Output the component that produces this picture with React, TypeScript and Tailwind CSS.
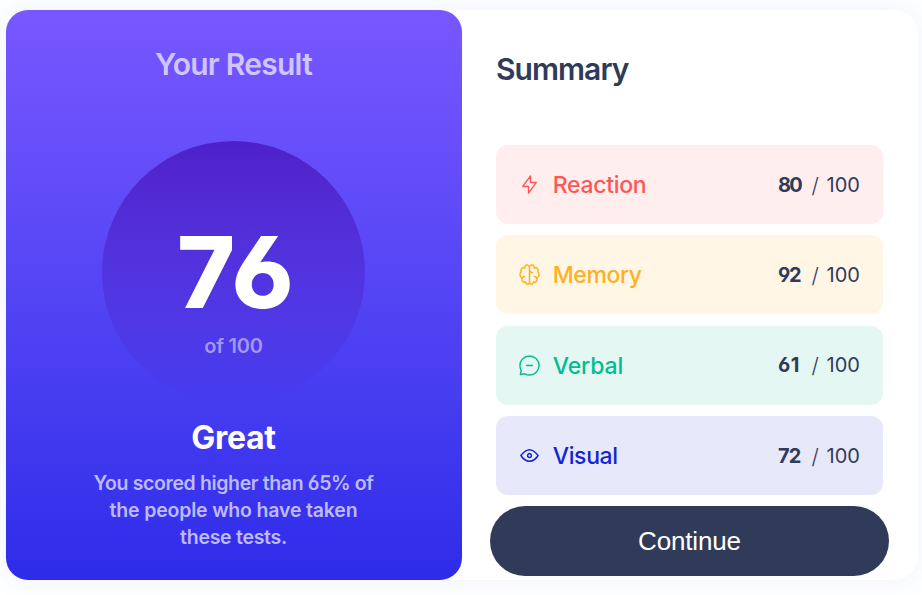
import type { ReactNode } from "react";

type Row = {
  label: string;
  score: number;
  bg: string;
  color: string;
  tracking: string;
  scoreTracking: string;
  icon: ReactNode;
};

const rows: Row[] = [
  {
    label: "Reaction",
    score: 80,
    bg: "bg-[#ffeeed]",
    color: "text-[#ff5757]",
    tracking: "tracking-[-0.3px]",
    scoreTracking: "tracking-[-1.8px]",
    icon: <path d="M10.833 8.333V2.5l-6.666 9.167h5V17.5l6.666-9.167h-5Z" />,
  },
  {
    label: "Memory",
    score: 92,
    bg: "bg-[#fff6e6]",
    color: "text-[#ffb01f]",
    tracking: "tracking-[-0.4px]",
    scoreTracking: "tracking-[-1.2px]",
    icon: (
      <>
        <path d="M5.833 11.667a2.5 2.5 0 1 0 .834 4.858" />
        <path d="M3.553 13.004a3.333 3.333 0 0 1-.728-5.53m.025-.067a2.083 2.083 0 0 1 2.983-2.824m.199.054A2.083 2.083 0 1 1 10 3.75v12.917a1.667 1.667 0 0 1-3.333 0M10 5.833a2.5 2.5 0 0 0 2.5 2.5m1.667 3.334a2.5 2.5 0 1 1-.834 4.858" />
        <path d="M16.447 13.004a3.334 3.334 0 0 0 .728-5.53m-.025-.067a2.083 2.083 0 0 0-2.983-2.824M10 3.75a2.085 2.085 0 0 1 2.538-2.033 2.084 2.084 0 0 1 1.43 2.92m-.635 12.03a1.667 1.667 0 0 1-3.333 0" />
      </>
    ),
  },
  {
    label: "Verbal",
    score: 61,
    bg: "bg-[#e5f7f3]",
    color: "text-[#00bd91]",
    tracking: "tracking-[-0.1px]",
    scoreTracking: "tracking-[0.4px]",
    icon: (
      <path d="M7.5 10h5M10 18.333A8.333 8.333 0 1 0 1.667 10c0 1.518.406 2.942 1.115 4.167l-.699 3.75 3.75-.699A8.295 8.295 0 0 0 10 18.333Z" />
    ),
  },
  {
    label: "Visual",
    score: 72,
    bg: "bg-[#e7e8fa]",
    color: "text-[#1125d4]",
    tracking: "tracking-[-0.35px]",
    scoreTracking: "tracking-[-0.9px]",
    icon: (
      <>
        <path d="M10 11.667a1.667 1.667 0 1 0 0-3.334 1.667 1.667 0 0 0 0 3.334Z" />
        <path d="M17.5 10c-1.574 2.492-4.402 5-7.5 5s-5.926-2.508-7.5-5C4.416 7.632 6.66 5 10 5s5.584 2.632 7.5 5Z" />
      </>
    ),
  },
];

function ScoreRow({ row }: { row: Row }) {
  return (
    <li className={`flex h-[79px] items-center rounded-xl pl-[22px] pr-[22px] ${row.bg}`}>
      <span className={`flex items-center gap-[11.7px] ${row.color}`}>
        <svg
          viewBox="0 0 20 20"
          className="size-[23px]"
          fill="none"
          stroke="currentColor"
          strokeWidth="1.25"
          strokeLinecap="round"
          strokeLinejoin="round"
        >
          {row.icon}
        </svg>
        <span className={`pt-[2px] text-[23px] leading-none font-medium ${row.tracking}`}>{row.label}</span>
      </span>
      <span className="ml-auto flex pt-px text-[20px] leading-none text-[#303b59]">
        <b className={`w-[33.5px] font-bold ${row.scoreTracking}`}>{row.score}</b>
        <span className="w-[15px] pt-px text-[21px] leading-[20px] font-light">/</span>
        <span className="w-[34.5px]">100</span>
      </span>
    </li>
  );
}

export default function App() {
  return (
    <main className="h-[595px] w-[922px] overflow-hidden bg-white pt-[10px] pl-[6px] font-['Inter',sans-serif] [font-feature-settings:'cv03','cv04']">
      <div className="flex h-[570px] w-[912px] rounded-[24px] bg-white shadow-[0_0_26px_4px_rgba(61,108,255,0.07)]">
        <section className="flex w-[456px] flex-col items-center rounded-[22px] bg-linear-to-b from-[#7857ff] to-[#2e2be9] pr-px">
          <h2 className="mt-[39px] text-[30px] leading-[30px] font-semibold tracking-[-0.75px] text-[#d0c5ff]">Your Result</h2>
          <div className="mt-[62px] flex size-[263px] flex-col items-center rounded-full bg-linear-to-b from-[#4d21c9] to-[#2421c9]/0">
            <span className="mt-[81px] pl-[5px] text-[99px] leading-[100px] font-extrabold tracking-[1.5px] text-white">76</span>
            <span className="mt-[14px] text-[20px] leading-[20px] font-semibold tracking-[-0.2px] text-[#a497f4]">of 100</span>
          </div>
          <h3 className="mt-[18px] text-[32px] leading-[32px] font-bold tracking-[-0.3px] text-white">Great</h3>
          <p className="mt-[16px] flex flex-col items-center text-[19.5px] leading-[27px] font-semibold text-[#bdbbff]">
            <span className="tracking-[-0.37px]">You scored higher than 65% of</span>
            <span className="tracking-[-0.18px]">the people who have taken</span>
            <span className="tracking-[-0.28px]">these tests.</span>
          </p>
        </section>
        <section className="flex flex-1 flex-col pr-[29px] pl-[28px]">
          <h2 className="mt-[44px] ml-[6px] text-[30px] leading-[30px] font-semibold tracking-[-0.95px] text-[#303b59]">Summary</h2>
          <ul className="mt-[61px] mr-[6px] ml-[6px] flex flex-col gap-[11.4px]">
            {rows.map((row) => (
              <ScoreRow key={row.label} row={row} />
            ))}
          </ul>
          <button className="mt-[11px] h-[70px] rounded-full bg-[#303b59] font-['Liberation_Sans',Arial,sans-serif] text-[26px] tracking-[-0.15px] text-white">
            Continue
          </button>
        </section>
      </div>
    </main>
  );
}
